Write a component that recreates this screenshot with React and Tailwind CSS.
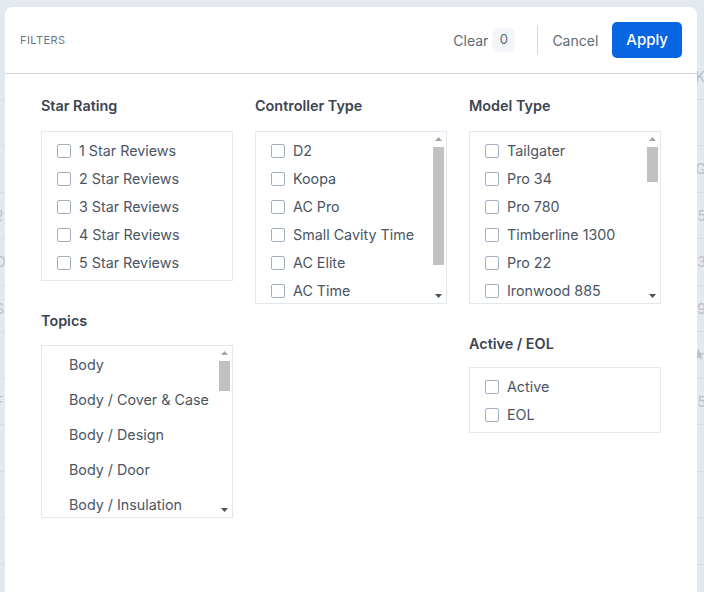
import React from 'react'

const STAR = ['1 Star Reviews', '2 Star Reviews', '3 Star Reviews', '4 Star Reviews', '5 Star Reviews']
const CONTROLLERS = ['D2', 'Koopa', 'AC Pro', 'Small Cavity Time', 'AC Elite', 'AC Time', 'Digital Pro']
const MODELS = [
  'Tailgater', 'Pro 34', 'Pro 780', 'Timberline 1300', 'Pro 22', 'Ironwood 885', 'Ironwood 650',
  'Timberline 850', 'Pro 575', 'Century 885', 'Ranger', 'Scout', 'Silverton 810', 'Woodridge',
]
const TOPICS = [
  'Body', 'Body / Cover & Case', 'Body / Design', 'Body / Door', 'Body / Insulation', 'Body / Legs',
  'Body / Paint', 'Body / Shelf', 'Controller', 'Controller / Display',
]
const BG_ROWS = [
  ['', 'G'], ['2', '5'], ['O', '3'], ['S', '9'], ['I', '★'], ['F', '5'], ['', ''], ['', ''], ['', ''],
]

// classic scrollbar look, drawn by hand since the list itself hides its overflow
function Scrollbar({ thumbTop, thumbHeight }) {
  return (
    <div className="w-[15px] shrink-0 flex flex-col bg-white">
      <div className="h-[14px] flex items-center justify-center">
        <svg width="7" height="4" viewBox="0 0 7 4"><path d="M0 4 L3.5 0 L7 4 Z" fill="#a3a3a3" /></svg>
      </div>
      <div className="flex-1 flex flex-col">
        <div className="mx-[2px] bg-[#c1c1c1]" style={{ marginTop: thumbTop, height: thumbHeight }} />
      </div>
      <div className="h-[14px] flex items-center justify-center">
        <svg width="7" height="4" viewBox="0 0 7 4"><path d="M0 0 L7 0 L3.5 4 Z" fill="#505050" /></svg>
      </div>
    </div>
  )
}

function Check({ label }) {
  return (
    <label className="flex items-center h-7 gap-2 cursor-pointer">
      <input
        type="checkbox"
        className="appearance-none w-3.5 h-3.5 shrink-0 border border-[#a3afbf] rounded-[2px] bg-white"
      />
      <span className="text-[14.3px] text-[#4b5565] whitespace-nowrap">{label}</span>
    </label>
  )
}

function Section({ title, mb, children }) {
  return (
    <div className="flex flex-col">
      <h3 className={`text-[14.4px] leading-6 font-semibold text-[#3b4452] ${mb}`}>{title}</h3>
      {children}
    </div>
  )
}

function CheckBox({ items }) {
  return (
    <div className="border border-[#e2e8f0] pl-[15px] pt-[5px] pb-[3px]">
      {items.map((it) => (
        <Check key={it} label={it} />
      ))}
    </div>
  )
}

function ScrollCheckBox({ items, thumbHeight }) {
  return (
    <div className="border border-[#e2e8f0] h-[173px] flex">
      <div className="flex-1 overflow-hidden pl-[15px] pt-[5px]">
        {items.map((it) => (
          <Check key={it} label={it} />
        ))}
      </div>
      <Scrollbar thumbTop={1} thumbHeight={thumbHeight} />
    </div>
  )
}

export default function App() {
  return (
    <div
      className="relative h-[592px] overflow-hidden bg-[#e4e8ef]"
      style={{ fontFamily: 'Inter, "Noto Sans", sans-serif' }}
    >
      {/* page behind the overlay */}
      <div className="flex flex-col pt-[54px] text-[14px] text-[#b9c0cb]">
        <div className="flex justify-between h-[46px] items-center border-b border-[#d9dee6] pr-[1px]">
          <span></span>
          <span className="-mr-[2px]">K</span>
        </div>
        <div className="h-[46px] border-b border-[#d9dee6]" />
        {BG_ROWS.map(([l, r], i) => (
          <div key={i} className="flex justify-between h-[46.5px] items-center border-b border-[#d9dee6]">
            <span className="-ml-[5px]">{l}</span>
            <span className="-mr-[2px]">{r}</span>
          </div>
        ))}
      </div>

      {/* filters panel */}
      <div className="absolute left-[5px] top-[7px] right-[7px] bottom-0 bg-white rounded-t-lg flex flex-col">
        <div className="h-[67px] shrink-0 flex items-center justify-between pl-[15px] pr-[15px] border-b border-[#cfd6df]">
          <span className="text-[11px] tracking-[0.04em] uppercase text-[#6b7787]">Filters</span>
          <div className="flex items-center">
            <button className="flex items-center text-[14px] text-[#5f6a78]">
              Clear
              <span className="ml-1 w-[23px] h-6 flex items-center justify-center rounded-md bg-[#f3f5f8] text-[13px] text-[#5f6a78]">
                0
              </span>
            </button>
            <span className="w-px h-[30px] bg-[#d5dbe3] ml-[22px] mr-[14px]" />
            <button className="text-[14px] text-[#5f6a78]">Cancel</button>
            <button className="ml-[14px] h-9 px-[14px] rounded-[5px] bg-[#0866e3] text-white text-[15px] font-medium">
              Apply
            </button>
          </div>
        </div>

        <div className="grid grid-cols-3 gap-[22px] px-9 pt-5 items-start">
          <div className="flex flex-col gap-[28px]">
            <Section title="Star Rating" mb="mb-[13px]">
              <CheckBox items={STAR} />
            </Section>
            <Section title="Topics" mb="mb-[12px]">
              <div className="border border-[#e2e8f0] h-[173px] flex">
                <div className="flex-1 overflow-hidden pt-[1px]">
                  {TOPICS.map((t) => (
                    <div key={t} className="h-[35px] flex items-center pl-[27px] text-[14.3px] text-[#4b5565] whitespace-nowrap">
                      {t}
                    </div>
                  ))}
                </div>
                <Scrollbar thumbTop={1} thumbHeight={30} />
              </div>
            </Section>
          </div>
          <div className="flex flex-col">
            <Section title="Controller Type" mb="mb-[13px]">
              <ScrollCheckBox items={CONTROLLERS} thumbHeight={118} />
            </Section>
          </div>
          <div className="flex flex-col gap-7">
            <Section title="Model Type" mb="mb-[13px]">
              <ScrollCheckBox items={MODELS} thumbHeight={35} />
            </Section>
            <Section title="Active / EOL" mb="mb-[11px]">
              <CheckBox items={['Active', 'EOL']} />
            </Section>
          </div>
        </div>
      </div>
    </div>
  )
}
